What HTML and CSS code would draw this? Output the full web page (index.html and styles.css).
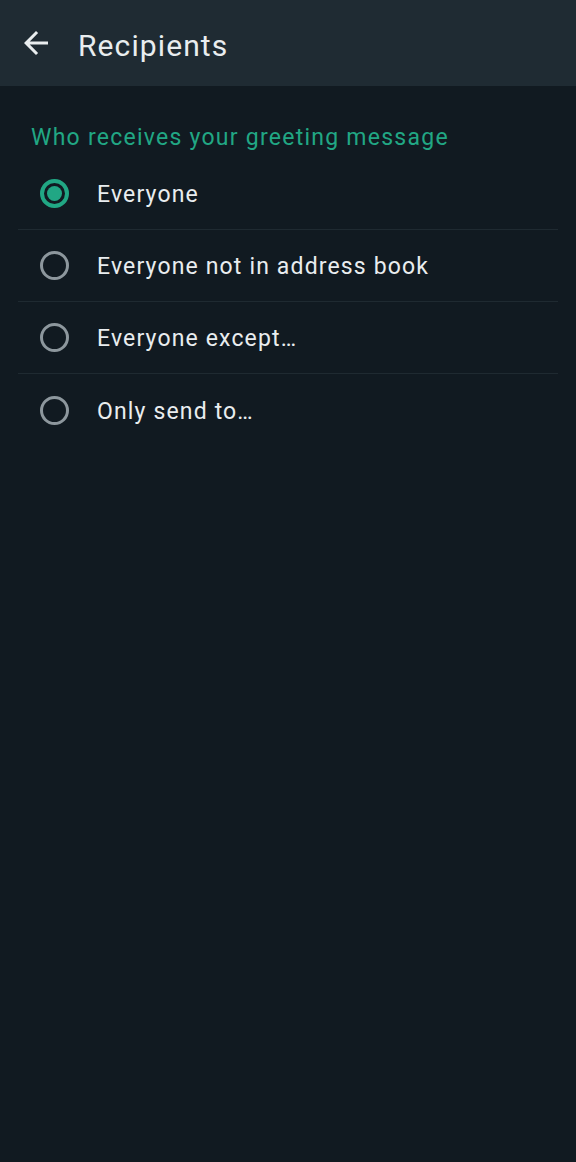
FILE: index.html
```html
<!DOCTYPE html>
<html>
<head>
<meta charset="utf-8">
<link rel="stylesheet" href="styles.css">
</head>
<body>
<header class="appbar">
  <svg class="back" viewBox="0 0 24 24" width="36" height="36"><path fill="#e9edef" d="M20 11H7.83l5.59-5.59L12 4l-8 8 8 8 1.41-1.41L7.83 13H20v-2z"/></svg>
  <h1 class="title">Recipients</h1>
</header>
<main class="content">
  <div class="section">Who receives your greeting message</div>
  <ul class="options">
    <li class="option selected"><span class="radio"></span><span class="label">Everyone</span></li>
    <li class="option"><span class="radio"></span><span class="label">Everyone not in address book</span></li>
    <li class="option"><span class="radio"></span><span class="label">Everyone except…</span></li>
    <li class="option last"><span class="radio"></span><span class="label">Only send to…</span></li>
  </ul>
</main>
</body>
</html>
```

FILE: styles.css
```css
html, body {
  margin: 0;
  padding: 0;
  height: 100%;
}
body {
  background: #111a21;
  font-family: Roboto, "Noto Sans", sans-serif;
  color: #e9edef;
}
.appbar {
  height: 86px;
  background: #1f2b33;
  display: flex;
  align-items: center;
  padding-left: 18px;
  box-sizing: border-box;
}
.back {
  display: block;
  flex: none;
}
.title {
  margin: 5px 0 0 24px;
  font-size: 30px;
  font-weight: 400;
  color: #e9edef;
  letter-spacing: 1.1px;
}
.content {
  padding: 0 18px;
}
.section {
  height: 72px;
  box-sizing: border-box;
  padding: 38px 0 0 13px;
  font-size: 23px;
  line-height: 28px;
  letter-spacing: 1.25px;
  color: #21a784;
}
.options {
  list-style: none;
  margin: 0;
  padding: 0;
}
.option {
  height: 72px;
  box-sizing: border-box;
  display: flex;
  align-items: center;
  border-bottom: 1px solid #1f2a31;
}
.option.last {
  border-bottom: none;
}
.radio {
  width: 29px;
  height: 29px;
  box-sizing: border-box;
  border: 3px solid #8d979d;
  border-radius: 50%;
  margin-left: 22px;
  flex: none;
  display: flex;
  align-items: center;
  justify-content: center;
}
.option.selected .radio {
  border: 4px solid #21a784;
}
.option.selected .radio::after {
  content: "";
  width: 15px;
  height: 15px;
  border-radius: 50%;
  background: #21a784;
}
.label {
  margin: 3px 0 0 28px;
  font-size: 23px;
  line-height: 28px;
  letter-spacing: 1.15px;
  color: #e9edef;
}
```
